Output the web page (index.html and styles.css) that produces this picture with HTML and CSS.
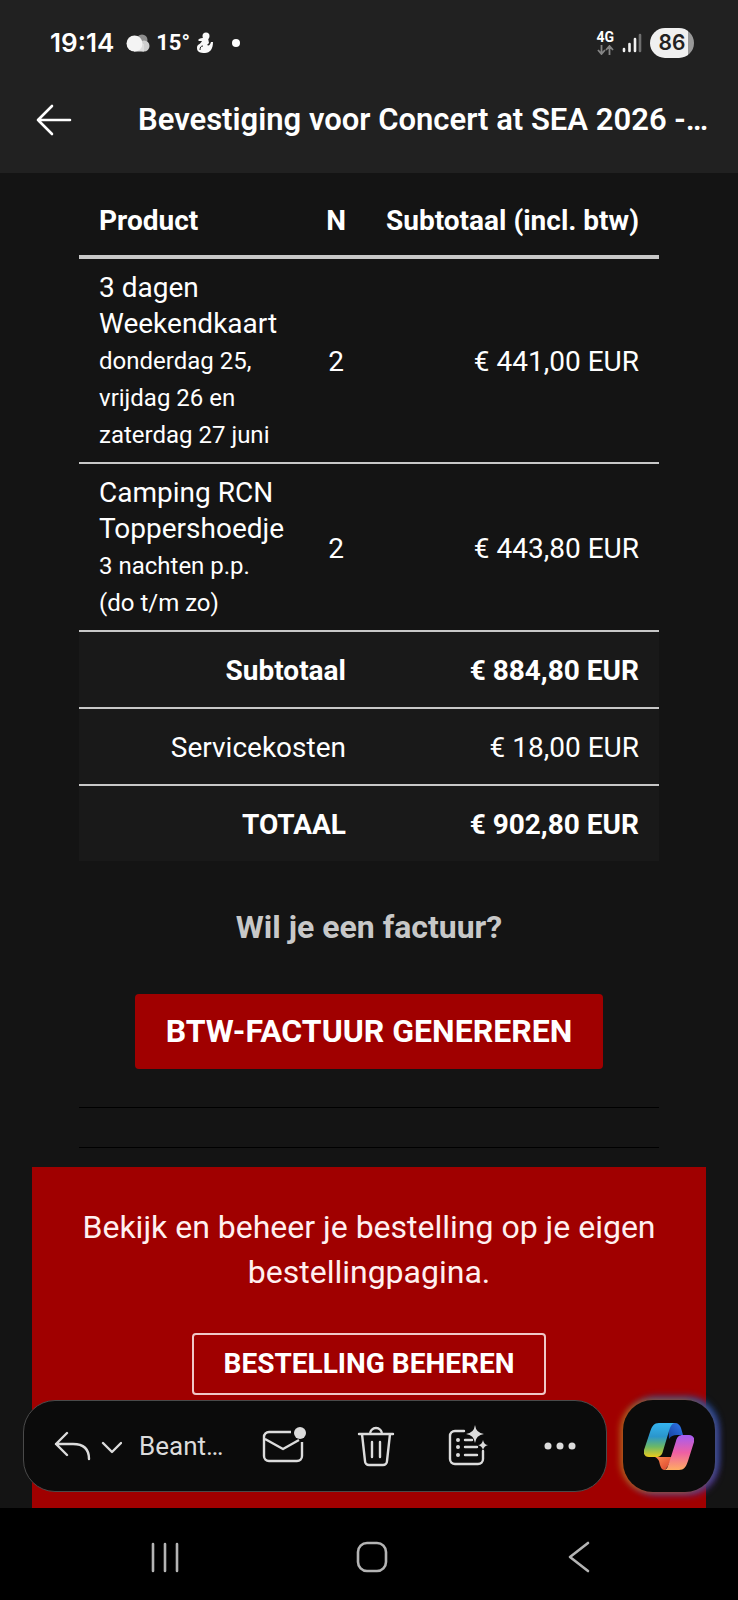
FILE: index.html
```html
<!DOCTYPE html>
<html lang="nl">
<head>
<meta charset="utf-8">
<meta name="viewport" content="width=device-width, initial-scale=1">
<title>Bevestiging voor Concert at SEA 2026</title>
<link rel="stylesheet" href="styles.css">
</head>
<body>
<header class="top">
  <div class="status">
    <div class="status-side">
      <span class="clock">19:14</span>
      <svg width="24" height="20" viewBox="0 0 24 20" aria-hidden="true">
        <circle cx="16" cy="7" r="5.500" fill="#8e8e8e"/>
        <circle cx="18" cy="13" r="5.500" fill="#cfcfcf"/>
        <path d="M8 11h10v7.500H8z" fill="#dedede"/>
        <circle cx="8.500" cy="10.500" r="8" fill="#f4f4f4"/>
      </svg>
      <span class="temp">15°</span>
      <svg width="18" height="22" viewBox="0 0 18 22" aria-hidden="true">
        <circle cx="10" cy="4" r="3.500" fill="#fafafa"/>
        <path d="M2 8c2-2 4-2 6-2h4l1 5-2 2c2 1 3 0 4-3h2c0 7-3 11-8 11S1 20 1 16s3-3 5-7L3 9z" fill="#fafafa"/>
        <path d="M4 18c0-3 1-4 3-4" stroke="#212121" stroke-width="1" fill="none"/>
      </svg>
      <span class="dot"></span>
    </div>
    <div class="status-side right">
      <div class="net">
        <span class="net-name">4G</span>
        <svg width="17" height="10" viewBox="0 0 17 10" fill="none" stroke="#858585" stroke-width="1.800" aria-hidden="true"><path d="M4.500 0v8M1 5l3.500 4L8 5M12.500 10V2M9 5l3.500-4L16 5"/></svg>
      </div>
      <svg width="20" height="20" viewBox="0 0 20 20" stroke-width="2.600" stroke-linecap="round" aria-hidden="true"><path d="M2 16v2M7.500 11v7M13 6v12" stroke="#f2f2f2"/><path d="M18 2v16" stroke="#6f6f6f"/></svg>
      <span class="battery">86</span>
    </div>
  </div>
  <div class="title-bar">
    <button class="icon-btn" type="button" aria-label="Terug">
      <svg width="36" height="32" viewBox="0 0 36 32" fill="none" stroke="#fff" stroke-width="2.600" stroke-linecap="round" stroke-linejoin="round"><path d="M34 16H2M16 2L2 16l14 14"/></svg>
    </button>
    <h1 class="title">Bevestiging voor Concert at SEA 2026 -…</h1>
  </div>
</header>
<main class="mail">
  <table class="order">
    <thead>
      <tr><th class="left" scope="col">Product</th><th class="count" scope="col">N</th><th scope="col">Subtotaal (incl. btw)</th></tr>
    </thead>
    <tbody>
      <tr><td class="left">3 dagen Weekendkaart <small>donderdag 25, vrijdag 26 en zaterdag 27 juni</small></td><td class="count">2</td><td>€ 441,00 EUR</td></tr>
      <tr><td class="left">Camping RCN Toppershoedje <small>3 nachten p.p. (do t/m zo)</small></td><td class="count">2</td><td>€ 443,80 EUR</td></tr>
    </tbody>
    <tfoot>
      <tr class="strong"><td colspan="2">Subtotaal</td><td>€ 884,80 EUR</td></tr>
      <tr><td colspan="2">Servicekosten</td><td>€ 18,00 EUR</td></tr>
      <tr class="strong"><td colspan="2">TOTAAL</td><td>€ 902,80 EUR</td></tr>
    </tfoot>
  </table>
  <section class="invoice">
    <h2 class="question">Wil je een factuur?</h2>
    <button class="primary" type="button">BTW-FACTUUR GENEREREN</button>
  </section>
  <hr class="rule">
  <hr class="rule">
  <section class="manage">
    <p class="manage-text">Bekijk en beheer je bestelling op je eigen bestellingpagina.</p>
    <button class="outline" type="button">BESTELLING BEHEREN</button>
  </section>
  <div class="floating">
    <div class="tools">
      <button class="icon-btn reply" type="button">
        <svg width="68" height="30" viewBox="0 0 68 30" fill="none" stroke="#dcdcdc" stroke-width="2.400" stroke-linecap="round" stroke-linejoin="round" aria-hidden="true"><path d="M13 2L2 13l11 11M2 13h17c10 0 16 5 16 15M49 12l9 9 9-9"/></svg>
        <span>Beant…</span>
      </button>
      <button class="icon-btn tool" type="button" aria-label="Markeren als ongelezen">
        <svg width="44" height="38" viewBox="0 0 44 38" fill="none" stroke="#dcdcdc" stroke-width="2.400" stroke-linejoin="round"><path d="M29 5H7a5 5 0 0 0-5 5v19a5 5 0 0 0 5 5h28a5 5 0 0 0 5-5V15M3 12l18 10 16-9"/><circle cx="38" cy="6" r="6" fill="#dcdcdc" stroke="none"/></svg>
      </button>
      <button class="icon-btn tool" type="button" aria-label="Verwijderen">
        <svg width="38" height="42" viewBox="0 0 38 42" fill="none" stroke="#dcdcdc" stroke-width="2.400" stroke-linecap="round" stroke-linejoin="round"><path d="M2 9h34M13 9a6 6 0 0 1 12 0M5 9l3 27a4 4 0 0 0 4 4h14a4 4 0 0 0 4-4l3-27M15 17v15M23 17v15"/></svg>
      </button>
      <button class="icon-btn tool" type="button" aria-label="Samenvatten">
        <svg width="42" height="42" viewBox="0 0 42 42" fill="none" stroke="#dcdcdc" stroke-width="2.400" stroke-linecap="round"><path d="M17 6H8a5 5 0 0 0-5 5v23a5 5 0 0 0 5 5h23a5 5 0 0 0 5-5v-8M18 15h7M18 22h12M18 30h12"/><path d="M28 0q1 8 9 9q-8 1-9 9q-1-8-9-9q8-1 9-9zM36 15q1 5 5 5q-4 1-5 5q-1-4-5-5q4 0 5-5z" fill="#dcdcdc" stroke="none"/><g fill="#dcdcdc" stroke="none"><circle cx="11" cy="15" r="2"/><circle cx="11" cy="22" r="2"/><circle cx="11" cy="30" r="2"/></g></svg>
      </button>
      <button class="icon-btn tool" type="button" aria-label="Meer">
        <svg width="32" height="8" viewBox="0 0 32 8" fill="#dcdcdc"><circle cx="4" cy="4" r="3.500"/><circle cx="16" cy="4" r="3.500"/><circle cx="28" cy="4" r="3.500"/></svg>
      </button>
    </div>
    <button class="copilot" type="button" aria-label="Copilot">
      <svg width="50" height="47" viewBox="0 0 50 47">
        <defs>
          <linearGradient id="left" x1="0" y1="0" x2="0" y2="1"><stop offset="0" stop-color="#35b4f0"/><stop offset=".4" stop-color="#2a96cc"/><stop offset=".7" stop-color="#6cb866"/><stop offset="1" stop-color="#eccb1c"/></linearGradient>
          <linearGradient id="right" x1="0" y1="0" x2="0" y2="1"><stop offset="0" stop-color="#a35cf4"/><stop offset=".5" stop-color="#ee5fa4"/><stop offset="1" stop-color="#ffac62"/></linearGradient>
          <linearGradient id="fold-top" x1="0" y1="1" x2="1" y2="0"><stop offset="0" stop-color="#163f9c"/><stop offset="1" stop-color="#2f7af0"/></linearGradient>
          <linearGradient id="fold-low" x1="0" y1="0" x2="1" y2="1"><stop offset="0" stop-color="#ff8a50"/><stop offset="1" stop-color="#d8402c"/></linearGradient>
        </defs>
        <path d="M24 0h7c3 0 5 2 6 5l2 7h-6c-4 0-6 1-8 4z" fill="url(#fold-top)"/>
        <path d="M11 34h17l-4 9-3 4c-3 0-4-2-5-5l-1-4c-1-2-2-3-4-4z" fill="url(#fold-low)"/>
        <path d="M15 0h16c-3 0-5 4-6 8l-6 20c-1 4-3 6-7 6H5c-4 0-6-3-5-7L6 9c2-6 4-9 9-9z" fill="url(#left)"/>
        <path d="M35 47H20c3 0 4-4 5-7l7-22c1-4 3-6 7-6h6c4 0 6 3 5 7l-6 19c-2 6-4 9-9 9z" fill="url(#right)"/>
      </svg>
    </button>
  </div>
</main>
<nav class="system-nav" aria-label="Systeemnavigatie">
  <button class="icon-btn nav-btn" type="button" aria-label="Recente apps"><svg width="30" height="32" viewBox="0 0 30 32" stroke="#b4b4b4" stroke-width="2.600" stroke-linecap="round"><path d="M3 3v27M15 3v27M27 3v27"/></svg></button>
  <button class="icon-btn nav-btn" type="button" aria-label="Startscherm"><svg width="32" height="32" viewBox="0 0 32 32" fill="none" stroke="#b4b4b4" stroke-width="2.600"><rect x="2" y="2" width="28" height="28" rx="9"/></svg></button>
  <button class="icon-btn nav-btn" type="button" aria-label="Vorige"><svg width="22" height="32" viewBox="0 0 22 32" fill="none" stroke="#b4b4b4" stroke-width="2.600" stroke-linecap="round" stroke-linejoin="round"><path d="M20 2L2 16l18 14"/></svg></button>
</nav>
</body>
</html>
```

FILE: styles.css
```css
* { box-sizing: border-box; }

body {
  margin: 0;
  height: 100vh;
  display: flex;
  flex-direction: column;
  background: #141414;
  color: #fff;
  font-family: Roboto, "Noto Sans", sans-serif;
  font-size: 28px;
  line-height: 36px;
}

button {
  font: inherit;
  color: inherit;
  cursor: pointer;
}

svg { display: block; flex: none; }

.icon-btn {
  display: flex;
  align-items: center;
  padding: 0;
  border: 0;
  background: none;
}

.top {
  flex: none;
  background: #212121;
}

.status {
  display: flex;
  justify-content: space-between;
  align-items: center;
  padding: 25px 44px 0 50px;
}

.status-side {
  display: flex;
  align-items: center;
  gap: 6px;
}

.status-side.right { gap: 8px; }

.clock {
  font-family: Inter, Roboto, sans-serif;
  font-size: 26px;
  font-weight: 600;
  padding-right: 6px;
}

.temp {
  font-size: 22px;
  font-weight: 700;
}

.dot {
  width: 8px;
  height: 8px;
  margin-left: 12px;
  border-radius: 50%;
  background: #fff;
}

.net {
  display: flex;
  flex-direction: column;
  align-items: center;
  gap: 2px;
}

.net-name {
  font-size: 14px;
  line-height: 12px;
  font-weight: 700;
}

.battery {
  width: 44px;
  border-radius: 15px;
  background: linear-gradient(90deg, #f0f0f0 86%, #999 86%);
  color: #212121;
  font-family: Inter, Roboto, sans-serif;
  font-size: 21px;
  font-weight: 600;
  line-height: 30px;
  text-align: center;
}

.title-bar {
  display: flex;
  align-items: center;
  gap: 66px;
  padding: 39px 24px 33px 36px;
}

.title {
  min-width: 0;
  margin: 0;
  overflow: hidden;
  white-space: nowrap;
  text-overflow: ellipsis;
  font-size: 31px;
  font-weight: 600;
  line-height: 40px;
}

.mail {
  position: relative;
  flex: 1;
  min-height: 0;
  overflow: hidden;
  display: flex;
  flex-direction: column;
  padding: 16px 32px 0;
}

.order {
  width: calc(100% - 94px);
  margin: 0 auto;
  border-collapse: collapse;
  text-align: right;
}

.order th,
.order td {
  padding: 21px 20px 18px;
  text-align: right;
  border-bottom: 2px solid #c8c8c8;
}

.order th {
  padding: 14px 20px 16px;
  border-bottom: 4px solid #c8c8c8;
  white-space: nowrap;
}

.order tbody td { padding: 11px 20px 8px; }

.order .left {
  text-align: left;
  padding-right: 0;
}

.order .count { text-align: center; }

.order small {
  display: block;
  max-width: 180px;
  margin-top: 1px;
  font-size: 24px;
  line-height: 37px;
}

.order tfoot { background: #191919; }
.order tfoot tr:last-child td { border-bottom: 0; }
.strong { font-weight: 700; }

.invoice {
  display: flex;
  flex-direction: column;
  align-items: center;
  gap: 46px;
  padding: 45px 0 38px;
}

.question {
  margin: 0;
  color: #c8c8c8;
  font-size: 32px;
  line-height: 42px;
}

.primary {
  padding: 16px 31px;
  border: 0;
  border-radius: 4px;
  background: #a00000;
  font-size: 32px;
  font-weight: 700;
  line-height: 43px;
}

.rule {
  width: calc(100% - 94px);
  margin: 0 auto 39px;
  border: 0;
  border-top: 1px solid #000;
}

.rule + .rule { margin-bottom: 19px; }

.manage {
  flex: 1;
  display: flex;
  flex-direction: column;
  align-items: center;
  gap: 38px;
  padding: 38px 40px 0;
  background: #a00000;
}

.manage-text {
  margin: 0;
  color: #fff0f0;
  font-size: 32px;
  line-height: 45px;
  text-align: center;
}

.outline {
  padding: 11px 30px;
  border: 2px solid #f0c8c8;
  border-radius: 4px;
  background: none;
  font-weight: 700;
}

.floating {
  position: absolute;
  right: 23px;
  bottom: 16px;
  left: 23px;
  display: flex;
  gap: 16px;
}

.tools {
  flex: 1;
  display: flex;
  align-items: center;
  padding-left: 30px;
  border: 1px solid #4a4a4a;
  border-radius: 32px;
  background: #0b0b0b;
  color: #dcdcdc;
}

.reply {
  flex: 1;
  gap: 17px;
  font-size: 26px;
}

.tool {
  width: 92px;
  justify-content: center;
}

.copilot {
  display: grid;
  place-items: center;
  width: 92px;
  height: 92px;
  padding: 0;
  border: 0;
  border-radius: 30px;
  background: #0b0b0b;
  box-shadow: -3px 0 6px #b85c10, 3px -3px 7px #2450a0, 3px 3px 7px #5a3690;
}

.system-nav {
  flex: none;
  display: flex;
  justify-content: space-between;
  align-items: center;
  height: 92px;
  padding: 6px 143px 0 149px;
  background: #000;
}

.nav-btn {
  width: 32px;
  justify-content: center;
}
```
